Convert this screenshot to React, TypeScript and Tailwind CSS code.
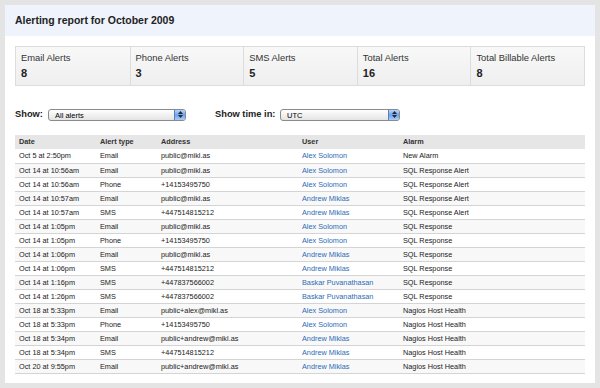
import { useState } from "react";

type Row = { date: string; type: string; address: string; user: string; alarm: string };

const stats = [
  { label: "Email Alerts", value: "8" },
  { label: "Phone Alerts", value: "3" },
  { label: "SMS Alerts", value: "5" },
  { label: "Total Alerts", value: "16" },
  { label: "Total Billable Alerts", value: "8" },
];

const rows: Row[] = [
  { date: "Oct 5 at 2:50pm", type: "Email", address: "public@mikl.as", user: "Alex Solomon", alarm: "New Alarm" },
  { date: "Oct 14 at 10:56am", type: "Email", address: "public@mikl.as", user: "Alex Solomon", alarm: "SQL Response Alert" },
  { date: "Oct 14 at 10:56am", type: "Phone", address: "+14153495750", user: "Alex Solomon", alarm: "SQL Response Alert" },
  { date: "Oct 14 at 10:57am", type: "Email", address: "public@mikl.as", user: "Andrew Miklas", alarm: "SQL Response Alert" },
  { date: "Oct 14 at 10:57am", type: "SMS", address: "+447514815212", user: "Andrew Miklas", alarm: "SQL Response Alert" },
  { date: "Oct 14 at 1:05pm", type: "Email", address: "public@mikl.as", user: "Alex Solomon", alarm: "SQL Response" },
  { date: "Oct 14 at 1:05pm", type: "Phone", address: "+14153495750", user: "Alex Solomon", alarm: "SQL Response" },
  { date: "Oct 14 at 1:06pm", type: "Email", address: "public@mikl.as", user: "Andrew Miklas", alarm: "SQL Response" },
  { date: "Oct 14 at 1:06pm", type: "SMS", address: "+447514815212", user: "Andrew Miklas", alarm: "SQL Response" },
  { date: "Oct 14 at 1:16pm", type: "SMS", address: "+447837566002", user: "Baskar Puvanathasan", alarm: "SQL Response" },
  { date: "Oct 14 at 1:26pm", type: "SMS", address: "+447837566002", user: "Baskar Puvanathasan", alarm: "SQL Response" },
  { date: "Oct 18 at 5:33pm", type: "Email", address: "public+alex@mikl.as", user: "Alex Solomon", alarm: "Nagios Host Health" },
  { date: "Oct 18 at 5:33pm", type: "Phone", address: "+14153495750", user: "Alex Solomon", alarm: "Nagios Host Health" },
  { date: "Oct 18 at 5:34pm", type: "Email", address: "public+andrew@mikl.as", user: "Andrew Miklas", alarm: "Nagios Host Health" },
  { date: "Oct 18 at 5:34pm", type: "SMS", address: "+447514815212", user: "Andrew Miklas", alarm: "Nagios Host Health" },
  { date: "Oct 20 at 9:55pm", type: "Email", address: "public+andrew@mikl.as", user: "Andrew Miklas", alarm: "Nagios Host Health" },
];

function FakeSelect({ value, width }: { value: string; width: string }) {
  return (
    <div
      className={`flex h-[12px] shrink-0 items-stretch overflow-hidden rounded-[3px] border border-[#8a8a8a] bg-gradient-to-b from-white to-[#e4e4e4] ${width}`}
    >
      <span className="flex-1 pl-[6px] text-[7.5px] leading-[11px] text-black">{value}</span>
      <span className="flex w-[11px] flex-col items-center justify-center gap-[1px] border-l border-[#5a7fc0] bg-gradient-to-b from-[#b8d4f6] via-[#6fa3e8] to-[#a9cdf6]">
        <svg width="5" height="3" viewBox="0 0 5 3"><path d="M0 3 L2.5 0 L5 3 Z" fill="#1c2a44" /></svg>
        <svg width="5" height="3" viewBox="0 0 5 3"><path d="M0 0 L2.5 3 L5 0 Z" fill="#1c2a44" /></svg>
      </span>
    </div>
  );
}

export default function App() {
  const [filter] = useState("All alerts");

  return (
    <div className="h-[388px] w-[600px] bg-[#e4e4e4] p-[5px] font-['Liberation_Sans',Arial,sans-serif] text-[#222]">
      <div className="h-[378px] w-[590px] bg-white">
        <div className="flex h-[31px] items-center bg-[#eef3fc] pl-[10px]">
          <h1 className="text-[10.5px] font-bold text-[#222]">Alerting report for October 2009</h1>
        </div>

        <div className="px-[10px] pt-[10px]">
          <div className="grid h-[40px] grid-cols-5 border border-[#dcdcdc] bg-gradient-to-b from-[#f8f8f8] to-[#efefef]">
            {stats.map((s, i) => (
              <div key={s.label} className={`pl-[5px] pt-[5px] ${i > 0 ? "border-l border-[#dcdcdc]" : ""}`}>
                <div className="text-[9.4px] leading-[12px] text-[#333]">{s.label}</div>
                <div className="mt-[3px] text-[11px] font-bold leading-[13px] text-[#222]">{s.value}</div>
              </div>
            ))}
          </div>

          <div className="mt-[22px] flex h-[13px] items-center">
            <span className="w-[33px] shrink-0 text-[9.3px] font-bold">Show:</span>
            <FakeSelect value={filter} width="w-[138px]" />
            <span className="ml-[29px] w-[65px] shrink-0 text-[9.3px] font-bold">Show time in:</span>
            <FakeSelect value="UTC" width="w-[120px]" />
          </div>

          <table className="mt-[14px] w-[570px] table-fixed border-collapse text-[7.3px]">
            <colgroup>
              <col className="w-[81px]" />
              <col className="w-[61px]" />
              <col className="w-[141px]" />
              <col className="w-[101px]" />
              <col />
            </colgroup>
            <thead>
              <tr className="h-[14px] bg-[#e6e6e6] text-left">
                {["Date", "Alert type", "Address", "User", "Alarm"].map((h) => (
                  <th key={h} className="pl-[4px] font-bold text-[#333]">{h}</th>
                ))}
              </tr>
            </thead>
            <tbody>
              {rows.map((r, i) => (
                <tr
                  key={i}
                  className={`h-[14px] border-b border-[#d4d4d4] ${i % 2 === 1 ? "bg-[#f8f8f8]" : "bg-white"}`}
                >
                  <td className="pl-[4px] leading-[13px]">{r.date}</td>
                  <td className="pl-[4px] leading-[13px]">{r.type}</td>
                  <td className="pl-[4px] leading-[13px]">{r.address}</td>
                  <td className="pl-[4px] leading-[13px] text-[#2d6cb5]">{r.user}</td>
                  <td className="pl-[4px] leading-[13px]">{r.alarm}</td>
                </tr>
              ))}
            </tbody>
          </table>
        </div>
      </div>
    </div>
  );
}
